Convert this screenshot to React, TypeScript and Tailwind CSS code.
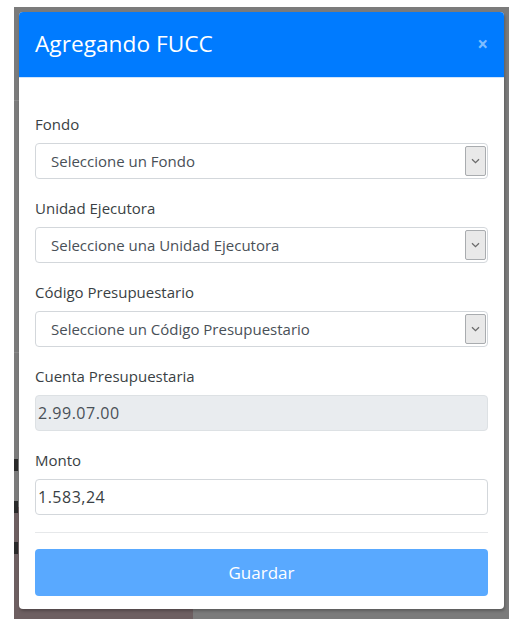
import React from "react";

const font = { fontFamily: '"Open Sans", "Noto Sans", sans-serif' };

function Chevron() {
  return (
    <svg width="9" height="6" viewBox="0 0 9 6" fill="none">
      <path d="M1 1.2 L4.5 4.6 L8 1.2" stroke="#6b6b6b" strokeWidth="1.3" />
    </svg>
  );
}

function SelectBox({ text }: { text: string }) {
  return (
    <div className="flex h-[36px] items-stretch rounded-[4px] border border-[#d3d7db] bg-white">
      <div className="flex flex-1 items-center pl-[15px] text-[15px] text-[#495057]">{text}</div>
      <div className="my-[2px] mr-[1px] flex w-[21px] items-center justify-center rounded-[2px] border border-[#a9acaf] bg-[#e9e9e9]">
        <Chevron />
      </div>
    </div>
  );
}

function Field({ label, children }: { label: string; children: React.ReactNode }) {
  return (
    <div className="flex flex-col">
      <div className="mb-[8px] h-[21px] text-[15px] leading-[21px] text-[#3a3f44]">{label}</div>
      {children}
    </div>
  );
}

export default function App() {
  return (
    <div className="relative h-[619px] w-[509px] overflow-hidden bg-white" style={font}>
      <div className="absolute inset-0 flex pl-[14px] pt-[7px]">
        <div className="relative flex-1 bg-[#7b7b7b]">
          {/* page content dimmed under the backdrop */}
          <div className="absolute bottom-0 left-0 h-[112px] w-[179px] bg-[#6d5f61]" />
          <div className="absolute left-0 top-[93px] h-px w-[5px] bg-[#8a8a8a]" />
          <div className="absolute left-0 top-[345px] h-px w-[5px] bg-[#8a8a8a]" />
          <div className="absolute left-0 top-[452px] h-[12px] w-[4px] bg-[#2a2a2a]" />
          <div className="absolute left-0 top-[494px] h-[12px] w-[4px] bg-[#2a2a2a]" />
          <div className="absolute left-0 top-[535px] h-[12px] w-[4px] bg-[#2a2a2a]" />

          <div className="absolute left-[5px] top-[5px] flex h-[597px] w-[485px] flex-col overflow-hidden rounded-[4px] bg-white shadow-[1px_2px_3px_rgba(0,0,0,0.25)]">
            <div className="flex h-[66px] items-center justify-between border-b border-[#cfe4fb] bg-[#007bff] pl-[16px] pr-[16px]">
              <div className="text-[22.7px] text-white">Agregando FUCC</div>
              <div className="text-[19px] font-bold leading-none text-white/50">×</div>
            </div>

            <div className="flex flex-1 flex-col px-[16px] pt-[36px]">
              <div className="flex flex-col gap-[19px]">
                <Field label="Fondo">
                  <SelectBox text="Seleccione un Fondo" />
                </Field>
                <Field label="Unidad Ejecutora">
                  <SelectBox text="Seleccione una Unidad Ejecutora" />
                </Field>
                <Field label="Código Presupuestario">
                  <SelectBox text="Seleccione un Código Presupuestario" />
                </Field>
                <Field label="Cuenta Presupuestaria">
                  <div className="flex h-[36px] items-center rounded-[4px] border border-[#dde1e4] bg-[#e9ecef] pl-[2px] text-[16px] tracking-[0.5px] text-[#495057]">
                    2.99.07.00
                  </div>
                </Field>
                <Field label="Monto">
                  <div className="flex h-[36px] items-center rounded-[4px] border border-[#d3d7db] bg-white pl-[2px] text-[16px] tracking-[0.5px] text-[#3a3f44]">
                    1.583,24
                  </div>
                </Field>
              </div>

              <div className="mt-[17px] h-px bg-[#e6e8ea]" />

              <button className="mt-[16px] flex h-[47px] items-center justify-center rounded-[4px] bg-[#59a9ff] text-[17px] text-white">
                Guardar
              </button>
            </div>
          </div>
        </div>
      </div>
    </div>
  );
}
